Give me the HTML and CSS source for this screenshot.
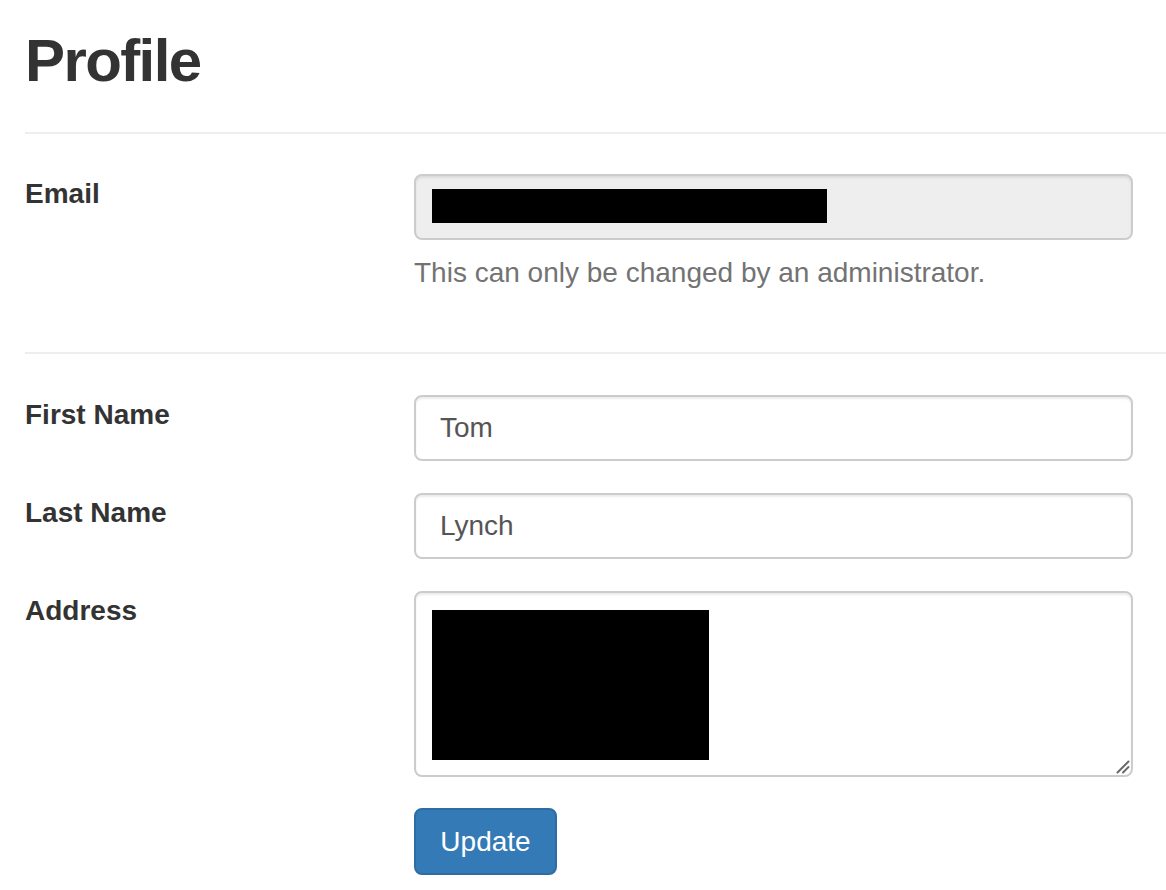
FILE: index.html
```html
<!DOCTYPE html>
<html lang="en">
<head>
<meta charset="utf-8">
<title>Profile</title>
<link rel="stylesheet" href="styles.css">
</head>
<body>
<div class="page">
  <div class="page-header">
    <h1 class="title">Profile</h1>
  </div>

  <section class="section">
    <div class="row">
      <div class="label">Email</div>
      <div class="field">
        <div class="control control-disabled" role="textbox" aria-disabled="true"><span class="redact redact-line"></span></div>
        <p class="help">This can only be changed by an administrator.</p>
      </div>
    </div>
  </section>

  <section class="section section-main">
    <div class="row">
      <div class="label">First Name</div>
      <div class="field">
        <div class="control" role="textbox">Tom</div>
      </div>
    </div>
    <div class="row">
      <div class="label">Last Name</div>
      <div class="field">
        <div class="control" role="textbox">Lynch</div>
      </div>
    </div>
    <div class="row">
      <div class="label">Address</div>
      <div class="field">
        <div class="control control-area" role="textbox" aria-multiline="true">
          <span class="redact redact-block"></span>
          <svg class="grip" width="14" height="14" viewBox="0 0 14 14" aria-hidden="true">
            <line x1="1.5" y1="12.5" x2="12.5" y2="1.5" stroke="#6a6a6a" stroke-width="2" stroke-linecap="round"/>
            <line x1="7" y1="12.5" x2="12.5" y2="7" stroke="#6a6a6a" stroke-width="2" stroke-linecap="round"/>
          </svg>
        </div>
      </div>
    </div>
    <div class="row">
      <div class="label"></div>
      <div class="field">
        <button class="btn" type="button">Update</button>
      </div>
    </div>
  </section>
</div>
</body>
</html>
```

FILE: styles.css
```css
html, body {
  margin: 0;
  padding: 0;
  background: #ffffff;
}

body {
  font-family: "Liberation Sans", Arial, Helvetica, sans-serif;
  color: #333333;
  font-size: 28px;
  line-height: 40px;
}

.page {
  padding-left: 25px;
}

.page-header {
  padding-top: 28px;
  padding-bottom: 38px;
  border-bottom: 2px solid #eeeeee;
}

.title {
  margin: 0;
  font-size: 60px;
  line-height: 66px;
  font-weight: 700;
  letter-spacing: -1.6px;
  color: #333333;
}

.section {
  padding-top: 41px;
  display: flex;
  flex-direction: column;
  gap: 32px;
}

.section:first-of-type {
  padding-bottom: 59px;
  border-bottom: 2px solid #eeeeee;
}

.row {
  display: grid;
  grid-template-columns: 389px 719px;
}

.row:last-child {
  margin-top: -1px;
}

.label {
  font-weight: 700;
  font-size: 28px;
  line-height: 40px;
  color: #333333;
}

.field {
  display: flex;
  flex-direction: column;
}

.control {
  position: relative;
  box-sizing: border-box;
  height: 66px;
  border: 2px solid #cccccc;
  border-radius: 8px;
  padding: 0 24px;
  display: flex;
  align-items: center;
  font-size: 28px;
  line-height: 40px;
  color: #555555;
  background: #ffffff;
  box-shadow: inset 0 2px 2px rgba(0, 0, 0, 0.075);
}

.control-disabled {
  background: #eeeeee;
  padding: 0 16px;
}

.control-area {
  height: 186px;
  align-items: flex-start;
  padding: 17px 16px;
}

.redact {
  display: block;
  background: #000000;
}

.redact-line {
  width: 395px;
  height: 34px;
  margin-top: -2px;
}

.redact-block {
  width: 277px;
  height: 150px;
}

.grip {
  position: absolute;
  right: 1px;
  bottom: 1px;
}

.help {
  margin: 13px 0 0;
  font-size: 28px;
  line-height: 40px;
  color: #737373;
}

.btn {
  align-self: flex-start;
  box-sizing: border-box;
  height: 67px;
  width: 143px;
  padding: 0;
  border: 2px solid #2e6da4;
  border-radius: 8px;
  background: #337ab7;
  color: #ffffff;
  font-family: "Liberation Sans", Arial, Helvetica, sans-serif;
  font-size: 28px;
  line-height: 40px;
  cursor: pointer;
}
```
